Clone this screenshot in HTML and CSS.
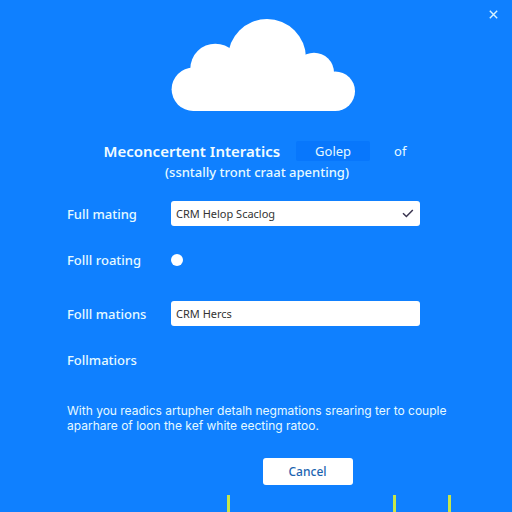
FILE: index.html
```html
<!DOCTYPE html>
<html lang="en">
<head>
    <meta charset="UTF-8">
    <meta name="viewport" content="width=device-width, initial-scale=1.0">
    <title>Meconcertent Interatics</title>
    <link rel="stylesheet" href="styles.css">
</head>
<body>
    <button type="button" class="close_btn" aria-label="Close">
        <svg width="9" height="9" viewBox="0 0 9 9"><path d="M0.8 0.8L8.2 8.2M8.2 0.8L0.8 8.2" fill="none" stroke="#d8f4ff" stroke-width="1.4"/></svg>
    </button>
    <header class="top_area">
        <svg class="cloud" width="184" height="92" viewBox="171 19 184 92" fill="#fff">
            <circle cx="193.3" cy="89.3" r="21.7"/>
            <circle cx="215.3" cy="68.7" r="25"/>
            <circle cx="267" cy="58" r="39"/>
            <circle cx="314" cy="72.7" r="20"/>
            <circle cx="335.2" cy="91.2" r="19.8"/>
            <path d="M193 69H240V60H300V73H335V111H193Z"/>
        </svg>
        <div class="title_row">
            <h1>Meconcertent Interatics</h1>
            <button type="button" class="tag_btn">Golep</button>
            <span class="of">of</span>
        </div>
        <p class="sub_title">(ssntally tront craat apenting)</p>
    </header>
    <main>
        <form class="my_form">
            <div class="row">
                <label for="mating">Full mating</label>
                <div class="select_box">
                    <select id="mating">
                        <option>CRM Helop Scaclog</option>
                    </select>
                    <svg class="check" width="12" height="9" viewBox="0 0 12 9"><path d="M1 4.2L4.4 7.5L10.8 1" fill="none" stroke="#3a3550" stroke-width="1.5"/></svg>
                </div>
            </div>
            <div class="row">
                <label for="roating">Folll roating</label>
                <input type="radio" id="roating">
            </div>
            <div class="row text_row">
                <label for="mations">Folll mations</label>
                <input type="text" id="mations" value="CRM Hercs">
            </div>
            <div class="row">
                <span>Follmatiors</span>
            </div>
            <p class="note">With you readics artupher detalh negmations srearing ter to couple<br>aparhare of loon the kef white eecting ratoo.</p>
            <button type="button" class="cancel_btn">Cancel</button>
        </form>
    </main>
    <footer class="marks">
        <i></i>
        <i></i>
        <i></i>
    </footer>
</body>
</html>
```
FILE: styles.css
```css
*{
    margin: 0;
    box-sizing: border-box;
}
body{
    display: flex;
    flex-direction: column;
    min-height: 100vh;
    background-color: #0f80ff;
    color: #e6faff;
    font-family: "Noto Sans", "Open Sans", sans-serif;
    font-size: 13px;
    line-height: 20px;
}
button, input, select{
    font-family: inherit;
    border: none;
}
.close_btn{
    position: absolute;
    top: 4px;
    right: 9px;
    display: flex;
    align-items: center;
    justify-content: center;
    width: 20px;
    height: 20px;
    padding: 0;
    background: none;
}
.top_area{
    display: flex;
    flex-direction: column;
    align-items: center;
    padding: 19px 0 0 14px;
}
.title_row{
    display: flex;
    align-items: center;
    margin: 30px 16px 0 0;
}
.title_row h1{
    font-size: 15px;
    font-weight: 600;
    color: #f2fcff;
}
.tag_btn{
    width: 74px;
    height: 20px;
    margin-left: 16px;
    border-radius: 2px;
    background-color: #0877fc;
    color: #e6faff;
    font-size: 13px;
}
.of{
    margin-left: 24px;
}
.sub_title{
    margin: 1px 12px 0 0;
    font-weight: 500;
}
.my_form{
    display: flex;
    flex-direction: column;
    gap: 21px;
    padding: 19px 92px 0 67px;
}
.row{
    display: grid;
    grid-template-columns: 104px 1fr;
    align-items: center;
    min-height: 25px;
    font-weight: 500;
}
.text_row{
    margin-top: 8px;
}
.select_box{
    position: relative;
}
.select_box select, .row input[type="text"]{
    display: block;
    width: 100%;
    height: 25px;
    padding: 0 5px;
    border-radius: 3px;
    background-color: #fff;
    color: #333;
    font-size: 11px;
    appearance: none;
}
.check{
    position: absolute;
    top: 8px;
    right: 6px;
    pointer-events: none;
}
.row input[type="radio"]{
    width: 12px;
    height: 12px;
    border-radius: 50%;
    background-color: #fff;
    appearance: none;
}
.note{
    margin-top: 10px;
    font-family: Inter, sans-serif;
    font-size: 12px;
    line-height: 15px;
    white-space: nowrap;
}
.cancel_btn{
    align-self: center;
    width: 90px;
    height: 27px;
    margin: 4px 0 0 128px;
    border-radius: 3px;
    background-color: #fff;
    color: #1c64b0;
    font-size: 12px;
    font-weight: 500;
}
.marks{
    display: grid;
    grid-template-columns: 165fr 55fr 64fr;
    height: 17px;
    margin-top: auto;
    padding-left: 227px;
}
.marks i{
    width: 3px;
    background-color: #c6e64a;
}
```
